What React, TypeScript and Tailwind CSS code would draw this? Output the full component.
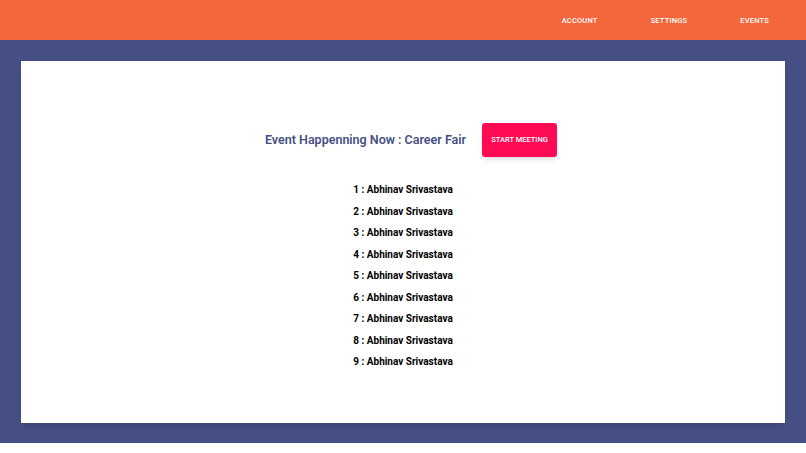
import React from "react";

const attendees = Array.from({ length: 9 }, (_, i) => ({ id: i + 1, name: "Abhinav Srivastava" }));

export default function App() {
    return (
        <div className="w-[806px] h-[453px] bg-white flex flex-col" style={{ fontFamily: "Roboto, 'Noto Sans', sans-serif" }}>
            {/* Header */}
            <header className="h-[40px] bg-[#f4663b] flex items-center justify-end pr-[37px] pt-[1px] shadow-sm">
                <nav className="flex items-center gap-[53px] text-[7.5px] font-medium text-white tracking-wide">
                    <a className="cursor-pointer">ACCOUNT</a>
                    <a className="cursor-pointer">SETTINGS</a>
                    <a className="cursor-pointer">EVENTS</a>
                </nav>
            </header>

            {/* Body */}
            <main className="h-[403px] bg-[#464f84] px-[21px] pt-[21px] pb-[20px]">
                <div className="h-full bg-white shadow-md flex flex-col items-center pt-[62px]">
                    <div className="flex items-center gap-[16px] pl-[16px]">
                        <h2 className="text-[12.5px] font-semibold text-[#464f84]">Event Happenning Now : Career Fair</h2>
                        <button className="w-[75px] h-[34px] bg-[#ff0a54] text-white text-[7.5px] font-medium rounded-[3px] shadow-md">
                            START MEETING
                        </button>
                    </div>
                    <ul className="mt-[26px] flex flex-col items-center gap-[8px]">
                        {attendees.map(a => (
                            <li key={a.id} className="text-[10px] leading-[13.5px] font-bold text-black">
                                {a.id} : {a.name}
                            </li>
                        ))}
                    </ul>
                </div>
            </main>
        </div>
    );
}
